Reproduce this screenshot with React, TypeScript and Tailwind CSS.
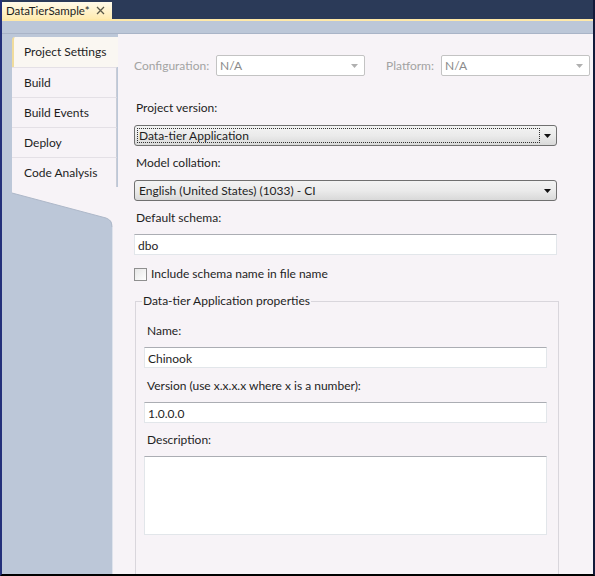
import React from 'react';

const tabs = ['Project Settings', 'Build', 'Build Events', 'Deploy', 'Code Analysis'];

const Arrow: React.FC<{ color: string }> = ({ color }) => (
  <svg width="7" height="4" viewBox="0 0 7 4" className="shrink-0">
    <path d="M0 0 L7 0 L3.5 4 Z" fill={color} />
  </svg>
);

const DisabledCombo: React.FC<{ value: string }> = ({ value }) => (
  <div className="w-[149px] h-[21px] flex items-center justify-between bg-white border border-[#c3c3c3] rounded-[2px] pl-[3px] pr-[6px]">
    <span className="text-[#8a8a8a]">{value}</span>
    <Arrow color="#b0b0b0" />
  </div>
);

const Combo: React.FC<{ value: string; focused?: boolean }> = ({ value, focused }) => (
  <div className="w-[423px] h-[21px] flex items-center bg-gradient-to-b from-[#f3f3f3] via-[#ebebeb] to-[#d9d9d9] border border-[#707070] rounded-[3px] p-[2px]">
    <div
      className={
        'flex-1 h-full flex items-center pl-[1px] ' +
        (focused ? 'border border-dotted border-[#333]' : 'border border-transparent')
      }
    >
      <span className="text-[#1e1e1e]">{value}</span>
    </div>
    <div className="w-[14px] h-full flex items-center justify-center">
      <Arrow color="#111" />
    </div>
  </div>
);

const TextBox: React.FC<{ value?: string; w: string; h?: string }> = ({ value, w, h }) => (
  <div
    className={
      w +
      ' ' +
      (h ?? 'h-[21px]') +
      ' bg-white border border-[#e2e6ea] border-t-[#abadb3] flex items-start pl-[3px] pt-[2px] text-[#1e1e1e]'
    }
  >
    {value}
  </div>
);

const Label: React.FC<{ children: React.ReactNode; className?: string }> = ({ children, className }) => (
  <div className={'h-[16px] leading-[16px] text-[#1e1e1e] ' + (className ?? '')}>{children}</div>
);

export default function App() {
  return (
    <div className="w-[595px] h-[576px] flex flex-col overflow-hidden border-l-2 border-l-[#23307a] border-r-2 border-r-[#131a3a] border-b-2 border-b-black font-['Lato',sans-serif] text-[12px]">
      {/* document tab strip */}
      <div className="h-[19px] shrink-0 bg-[#2b3a58] flex items-end">
        <div className="w-[110px] h-[17px] bg-gradient-to-b from-[#fffaea] to-[#ffebb0] flex items-center justify-between pl-[4px] pr-[7px] text-[11.5px] text-[#1e1e1e]">
          <span>DataTierSample*</span>
          <svg width="9" height="9" viewBox="0 0 9 9">
            <path d="M1 1 L8 8 M8 1 L1 8" stroke="#5a5848" strokeWidth="1.3" />
          </svg>
        </div>
      </div>
      <div className="h-[2px] shrink-0 bg-[#ffe9a8]" />
      <div className="h-[13px] shrink-0 bg-[#bcc7d8] border-b border-b-[#a9b4c7]" />

      {/* body */}
      <div className="flex-1 flex min-h-0">
        {/* left tabs */}
        <div className="w-[116px] shrink-0 flex flex-col bg-[#bcc7d8]">
          <div className="mt-[3px] ml-[10px] w-[106px] flex flex-col">
            {tabs.map((t, i) =>
              i === 0 ? (
                <div
                  key={t}
                  className="h-[30px] flex items-center pl-[10px] bg-[#faf7f2] border-l-2 border-l-[#f0dc9c] rounded-tl-[3px] text-[#1e1e1e]"
                >
                  {t}
                </div>
              ) : (
                <div
                  key={t}
                  className="h-[30px] w-[105px] flex items-center pl-[12px] bg-[#f7f3f7] border-t border-t-[#e4e0e6] border-r border-r-[#c9ccd6] text-[#1e1e1e]"
                >
                  {t}
                </div>
              )
            )}
          </div>
          <svg width="116" height="40" viewBox="0 0 116 40" className="shrink-0 block">
            <rect width="116" height="40" fill="#bcc7d8" />
            <path d="M10 0 L116 0 L116 40 L110 40 L110 37 Q110 33 104 31 L10 6 Z" fill="#f7f3f7" />
            <path d="M10 6 L104 31 Q110 33 110 40" fill="none" stroke="#aeb8c9" strokeWidth="1" />
          </svg>
          <div className="flex-1 flex">
            <div className="w-[110px] bg-[#bcc7d8]" />
            <div className="flex-1 bg-[#f7f3f7] border-l border-l-[#dfe3ec]" />
          </div>
        </div>

        {/* content */}
        <div className="flex-1 bg-[#f7f3f7] overflow-hidden pl-[16px] pt-[21px] flex flex-col">
          <div className="flex items-center h-[21px]">
            <span className="w-[82px] text-[#a3a3a3]">Configuration:</span>
            <DisabledCombo value="N/A" />
            <span className="ml-[21px] w-[55px] text-[#a3a3a3]">Platform:</span>
            <DisabledCombo value="N/A" />
          </div>
          <div className="mt-[14px] -ml-[2px] mr-[1px] h-[1px] bg-[#c9c9c9]" />

          <Label className="mt-[10px] pl-[2px]">Project version:</Label>
          <div className="mt-[9px]">
            <Combo value="Data-tier Application" focused />
          </div>

          <Label className="mt-[9px] pl-[2px]">Model collation:</Label>
          <div className="mt-[9px]">
            <Combo value="English (United States) (1033) - CI" />
          </div>

          <Label className="mt-[9px] pl-[2px]">Default schema:</Label>
          <div className="mt-[8px]">
            <TextBox value="dbo" w="w-[423px]" />
          </div>

          <div className="mt-[11px] h-[16px] flex items-center">
            <div className="w-[13px] h-[13px] border border-[#8f8f8f] bg-gradient-to-br from-[#e6e6e6] to-[#ffffff]" />
            <span className="ml-[4px] text-[#1e1e1e]">Include schema name in file name</span>
          </div>

          <fieldset className="mt-[11px] ml-[1px] w-[424px] h-[320px] shrink-0 border border-[#d9d6dc] pl-[8px]">
            <legend className="ml-[-2px] px-[1px] h-[16px] leading-[16px] text-[#1e1e1e]">
              Data-tier Application properties
            </legend>
            <Label className="mt-[14px] pl-[3px]">Name:</Label>
            <div className="mt-[8px]">
              <TextBox value="Chinook" w="w-[403px]" />
            </div>
            <Label className="mt-[10px] pl-[3px]">Version (use x.x.x.x where x is a number):</Label>
            <div className="mt-[8px]">
              <TextBox value="1.0.0.0" w="w-[403px]" />
            </div>
            <Label className="mt-[9px] pl-[3px]">Description:</Label>
            <div className="mt-[8px]">
              <TextBox w="w-[403px]" h="h-[79px]" />
            </div>
          </fieldset>
        </div>
      </div>
    </div>
  );
}
